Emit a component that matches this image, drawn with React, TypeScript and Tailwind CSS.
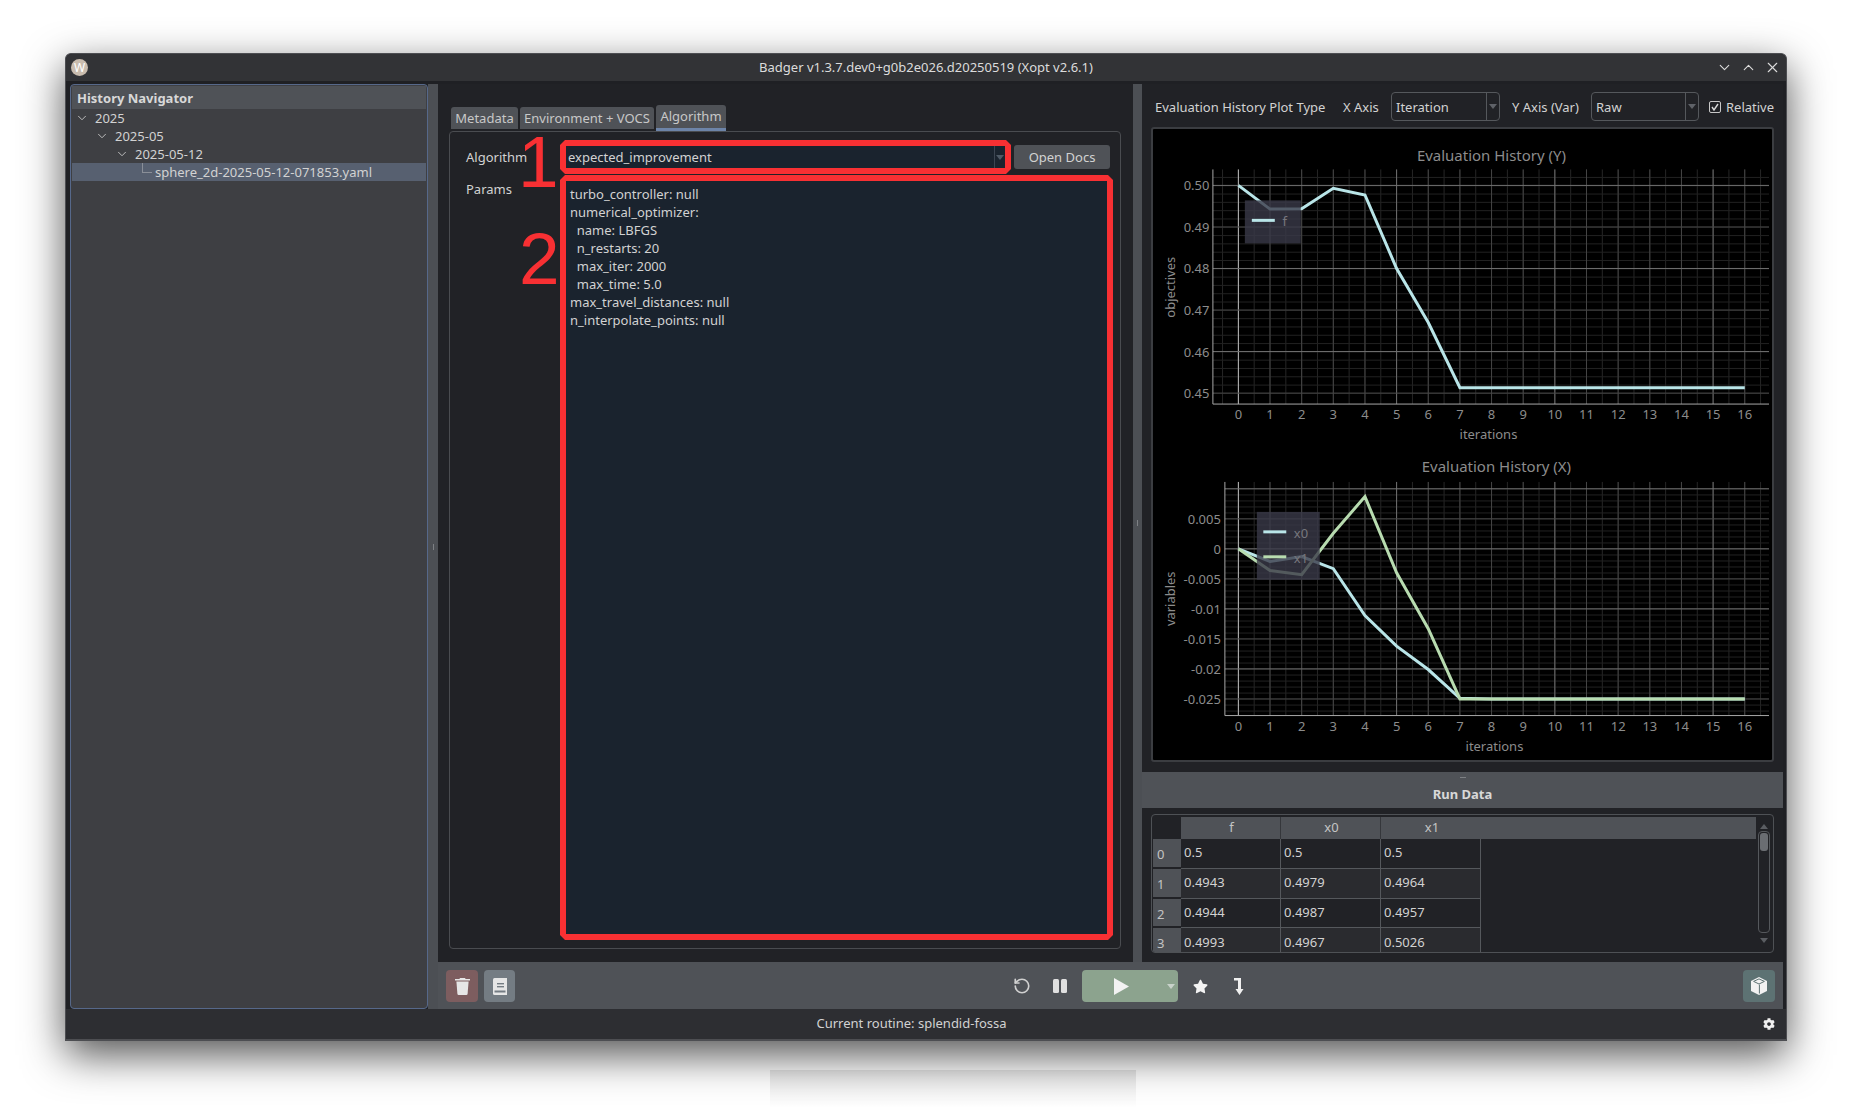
import { ChevronDown, ChevronUp, RotateCcw, X } from "lucide-react";
import { FaCog, FaStar } from "react-icons/fa";

const ITER = Array.from({ length: 17 }, (_, i) => i);
const xPos = (i: number) => 1238.5 + i * 31.7;

const fData = [0.5, 0.4943, 0.4944, 0.4993, 0.4977, 0.48, 0.467, 0.4513, 0.4513, 0.4513, 0.4513, 0.4513, 0.4513, 0.4513, 0.4513, 0.4513, 0.4513];
const x0Data = [0, -0.0021, -0.0013, -0.0033, -0.0111, -0.0162, -0.0201, -0.0249, -0.025, -0.025, -0.025, -0.025, -0.025, -0.025, -0.025, -0.025, -0.025];
const x1Data = [0, -0.0036, -0.0043, 0.0026, 0.0087, -0.004, -0.0133, -0.025, -0.025, -0.025, -0.025, -0.025, -0.025, -0.025, -0.025, -0.025, -0.025];

const y1 = (v: number) => 185 + (0.5 - v) * 4160;
const y2 = (v: number) => 549 - v * 6014;
const pts = (data: number[], fy: (v: number) => number) => data.map((v, i) => `${xPos(i)},${fy(v)}`).join(" ");

const rows = [
  ["0.5", "0.5", "0.5"],
  ["0.4943", "0.4979", "0.4964"],
  ["0.4944", "0.4987", "0.4957"],
  ["0.4993", "0.4967", "0.5026"],
];

const paramLines = [
  "turbo_controller: null",
  "numerical_optimizer:",
  "  name: LBFGS",
  "  n_restarts: 20",
  "  max_iter: 2000",
  "  max_time: 5.0",
  "max_travel_distances: null",
  "n_interpolate_points: null",
];

function Arrow({ color = "#5f6268", up = false }: { color?: string; up?: boolean }) {
  return (
    <svg width="8" height="5" viewBox="0 0 8 5">
      <polygon points={up ? "0,5 8,5 4,0" : "0,0 8,0 4,5"} fill={color} />
    </svg>
  );
}

function Combo({ label, className }: { label: string; className: string }) {
  return (
    <div className={`flex h-[29px] items-center rounded-[4px] border border-[#55585c] ${className}`}>
      <span className="flex-1 pt-[2px] pl-[4px] text-[#d2d2d2]">{label}</span>
      <div className="flex h-full w-[13px] items-center justify-center border-l border-[#55585c]">
        <Arrow />
      </div>
    </div>
  );
}

function TreeRow({ label, pad, selected }: { label: string; pad: string; selected?: boolean }) {
  return (
    <div className={`flex h-[18px] items-center ${pad} ${selected ? "bg-[#576070]" : ""}`}>
      {selected ? (
        <span className="mr-[3px] mb-[9px] h-[10px] w-[10px] border-b border-l border-[#8a8f98]" />
      ) : (
        <ChevronDown size={14} strokeWidth={1.6} className="mr-[6px] text-[#c4c4c4]" />
      )}
      <span className="pt-[2px]">{label}</span>
    </div>
  );
}

function Grid({ top, bottom, left, hFaint, hMid, hBright }: { top: number; bottom: number; left: number; hFaint: number[]; hMid: number[]; hBright: number[] }) {
  const halves = Array.from({ length: 35 }, (_, i) => 1222.65 + i * 15.85).filter((x) => x > left);
  return (
    <g>
      {halves.map((x) => (
        <line key={x} x1={x} x2={x} y1={top} y2={bottom} stroke="#262626" />
      ))}
      {hFaint.map((y) => (
        <line key={y} x1={left} x2={1770} y1={y} y2={y} stroke="#222222" />
      ))}
      {ITER.map((i) => (
        <line key={i} x1={xPos(i)} x2={xPos(i)} y1={top} y2={bottom} stroke={i === 0 ? "#c0c0c0" : i % 5 === 0 ? "#707070" : "#454545"} />
      ))}
      {hMid.map((y) => (
        <line key={y} x1={left} x2={1770} y1={y} y2={y} stroke="#474747" />
      ))}
      {hBright.map((y) => (
        <line key={y} x1={left} x2={1770} y1={y} y2={y} stroke="#707070" />
      ))}
      <line x1={left} x2={left} y1={top} y2={bottom} stroke="#a8a8a8" />
      <line x1={left} x2={1770} y1={bottom} y2={bottom} stroke="#a8a8a8" />
    </g>
  );
}

function XTicks({ y }: { y: number }) {
  return (
    <g>
      {ITER.map((i) => (
        <text key={i} x={xPos(i)} y={y} textAnchor="middle" fontSize="13" fill="#8c8c8c">
          {i}
        </text>
      ))}
    </g>
  );
}

function Plots() {
  const faint1 = Array.from({ length: 27 }, (_, i) => 177 + i * 8.32);
  const faint2 = Array.from({ length: 38 }, (_, i) => 489 + i * 6.014);
  const yLabels2: [string, number][] = [["0.005", 0.005], ["0", 0], ["-0.005", -0.005], ["-0.01", -0.01], ["-0.015", -0.015], ["-0.02", -0.02], ["-0.025", -0.025]];
  return (
    <svg viewBox="1153 129 620 631" className="h-full w-full" fontFamily="'Noto Sans', sans-serif">
      <text x="1492" y="160.5" textAnchor="middle" fontSize="15" fill="#8c8c8c">Evaluation History (Y)</text>
      <Grid top={169} bottom={404} left={1213} hFaint={faint1} hMid={[0.49, 0.47, 0.45].map(y1)} hBright={[0.5, 0.48, 0.46].map(y1)} />
      {[0.5, 0.49, 0.48, 0.47, 0.46, 0.45].map((v) => (
        <text key={v} x="1209.5" y={y1(v) + 5} textAnchor="end" fontSize="13" fill="#8c8c8c">{v.toFixed(2)}</text>
      ))}
      <XTicks y={419} />
      <text x="1489" y="439" textAnchor="middle" fontSize="13" fill="#8c8c8c">iterations</text>
      <text x="1175" y="287" textAnchor="middle" fontSize="13" fill="#8c8c8c" transform="rotate(-90 1175 287)">objectives</text>
      <polyline points={pts(fData, y1)} fill="none" stroke="#b9e5e8" strokeWidth="3" />
      <rect x="1245" y="200" width="56" height="43" fill="rgba(58,57,72,0.8)" />
      <line x1="1252" x2="1275" y1="220" y2="220" stroke="#b9e5e8" strokeWidth="3" />
      <text x="1285" y="226" textAnchor="middle" fontSize="13" fill="#77777d">f</text>

      <text x="1497" y="472" textAnchor="middle" fontSize="15" fill="#8c8c8c">Evaluation History (X)</text>
      <Grid top={482} bottom={716} left={1225} hFaint={faint2} hMid={[0.005, -0.005, -0.015, -0.025].map(y2)} hBright={[0.01, 0, -0.01, -0.02].map(y2)} />
      {yLabels2.map(([t, v]) => (
        <text key={t} x="1221" y={y2(v) + 5} textAnchor="end" fontSize="13" fill="#8c8c8c">{t}</text>
      ))}
      <XTicks y={731} />
      <text x="1495" y="752" textAnchor="middle" fontSize="13" fill="#8c8c8c">iterations</text>
      <text x="1175" y="599" textAnchor="middle" fontSize="13" fill="#8c8c8c" transform="rotate(-90 1175 599)">variables</text>
      <polyline points={pts(x0Data, y2)} fill="none" stroke="#b9e5e8" strokeWidth="3" />
      <polyline points={pts(x1Data, y2)} fill="none" stroke="#b8dcb0" strokeWidth="3" />
      <rect x="1257" y="512" width="63" height="68" fill="rgba(58,57,72,0.8)" />
      <line x1="1263.5" x2="1286.5" y1="532" y2="532" stroke="#b9e5e8" strokeWidth="3" />
      <line x1="1263.5" x2="1286.5" y1="557" y2="557" stroke="#b8dcb0" strokeWidth="3" />
      <text x="1294" y="538" fontSize="13" fill="#77777d">x0</text>
      <text x="1294" y="563" fontSize="13" fill="#77777d">x1</text>
    </svg>
  );
}

function RunTable() {
  return (
    <div className="mx-[9px] mt-[6px] flex h-[139px] overflow-hidden rounded-[4px] border border-[#4e5155] px-[1px] pt-[2px]">
      <div className="w-[603px]">
        <div className="flex h-[22px] pl-[28px]">
          {["f", "x0"].map((h) => (
            <div key={h} className="flex w-[100px] items-center justify-center border-r border-[#35373b] bg-[#4f5257] pl-[2px] text-[#c4c4c4]">
              {h}
            </div>
          ))}
          <div className="flex w-[100px] items-center justify-center bg-[#4f5257] pl-[2px] text-[#c4c4c4]">x1</div>
          <div className="flex-1 bg-[#4f5257]" />
        </div>
        {rows.map((row, i) => (
          <div key={i} className="flex h-[29.8px]">
            <div className="w-[28px] border-b-2 border-[#212226] bg-[#4f5257] pt-[6px] pl-[4px] text-[#c4c4c4]">{i}</div>
            {row.map((c, j) => (
              <div key={j} className={`flex w-[100px] items-center border-r border-b border-[#55585c] pb-px pl-[3px] ${i % 2 ? "bg-[#2a2b2f]" : "bg-[#212226]"}`}>
                {c}
              </div>
            ))}
          </div>
        ))}
      </div>
      <div className="flex flex-1 flex-col items-center pt-[7px]">
        <Arrow up color="#5a5d62" />
        <div className="mt-[2px] h-[102px] w-[12px] rounded-[4px] border border-[#55585c] p-[1px]">
          <div className="h-[18px] rounded-[3px] bg-[#6a6d72]" />
        </div>
        <div className="mt-[5px]">
          <Arrow color="#5a5d62" />
        </div>
      </div>
    </div>
  );
}

function Toolbar() {
  return (
    <div className="flex h-[47px] items-center bg-[#4f5257] pt-px pl-[8px]">
      <button className="flex h-[32px] w-[32px] items-center justify-center rounded-[4px] bg-[#7d5d5f]">
        <svg width="15" height="17" viewBox="0 0 15 17">
          <path d="M5 0h5l.6 1H15v1.6H0V1h4.4z" fill="#e6e6e6" />
          <path d="M1.4 3.6h12.2l-1 12.2q-.1 1.2-1.2 1.2H3.6q-1.1 0-1.2-1.2z" fill="#e6e6e6" />
        </svg>
      </button>
      <button className="ml-[6px] flex h-[32px] w-[31px] items-center justify-center rounded-[4px] bg-[#747c83]">
        <svg width="14" height="17" viewBox="0 0 14 17">
          <path d="M1.5 0H14v17H1.5Q0 17 0 15.5v-14Q0 0 1.5 0z" fill="#e6e6e6" />
          <rect x="4" y="5" width="7" height="1.4" fill="#747c83" />
          <rect x="4" y="8" width="7" height="1.4" fill="#747c83" />
          <rect x="1.5" y="12.5" width="11" height="2" fill="#747c83" />
        </svg>
      </button>
      <RotateCcw size={18} strokeWidth={2.2} className="ml-[498px] text-[#d0d0d0]" />
      <div className="ml-[22px] flex gap-[2px]">
        <span className="h-[14px] w-[6px] rounded-[1.5px] bg-[#e0e0e0]" />
        <span className="h-[14px] w-[6px] rounded-[1.5px] bg-[#e0e0e0]" />
      </div>
      <button className="relative ml-[15px] flex h-[32px] w-[96px] items-center rounded-[4px] bg-[#8ca38e] pl-[32px]">
        <svg width="15" height="17" viewBox="0 0 15 17">
          <polygon points="0,0 15,8.5 0,17" fill="#f2f2f2" />
        </svg>
        <span className="ml-[38px]">
          <Arrow color="#c8d2ca" />
        </span>
      </button>
      <FaStar size={15} className="ml-[15px] text-[#f4f4f4]" />
      <svg width="11" height="17" viewBox="0 0 11 17" className="ml-[25px]">
        <path d="M1 0h7v11h2.5L6.5 17 2.5 11H5V2.4H1z" fill="#f0f0f0" />
      </svg>
      <button className="mr-[8px] ml-auto flex h-[32px] w-[32px] items-center justify-center rounded-[4px] bg-[#5d7273]">
        <svg width="16" height="18" viewBox="0 0 16 18">
          <polygon points="8,0 16,4 16,14 8,18 0,14 0,4" fill="#f2f2f2" />
          <path d="M2.6 4.4 8 1.9l5.4 2.5L8 7z" fill="#f2f2f2" stroke="#5d7273" strokeWidth="1" />
          <line x1="8.4" y1="7.6" x2="8.4" y2="16.5" stroke="#5d7273" strokeWidth="1" />
        </svg>
      </button>
    </div>
  );
}

export default function App() {
  return (
    <div className="relative h-[1119px] w-[1852px] overflow-hidden bg-white pt-[53px] pl-[65px] font-['Noto_Sans',sans-serif] text-[13px] text-[#d2d2d2]">
      {/* stray shadow of the window behind */}
      <div className="absolute top-[1070px] left-[770px] h-[38px] w-[366px] bg-gradient-to-b from-black/10 to-transparent" />

      <div className="relative flex h-[988px] w-[1722px] flex-col rounded-t-[6px] border border-b-2 border-[#4d4e52] bg-[#2d2e32] shadow-[0_14px_42px_rgba(0,0,0,0.68)]">
        <div className="relative flex h-[27px] items-center justify-center rounded-t-[6px] bg-[#323336] text-[#dcdcdc]">
          <div className="absolute top-[5px] left-[5px] flex h-[17px] w-[17px] items-center justify-center rounded-full bg-[#c9bcae] text-[12px] leading-none text-white">
            W
          </div>
          <span>Badger v1.3.7.dev0+g0b2e026.d20250519 (Xopt v2.6.1)</span>
          <div className="absolute top-[5px] right-[5px] flex gap-[7px] text-[#dcdcdc]">
            <ChevronDown size={17} strokeWidth={1.6} />
            <ChevronUp size={17} strokeWidth={1.6} />
            <X size={17} strokeWidth={1.6} />
          </div>
        </div>

        <div className="flex h-[928px] bg-[#1f2024] pt-[3px] pr-[3px] pl-[4px]">
          {/* history navigator */}
          <div className="h-[925px] w-[358px] rounded-[4px] border border-[#56688a] bg-[#3e3f43] p-[1px]">
            <div className="flex h-[23px] items-center bg-[#4f5257] pt-[2px] pl-[5px] font-bold text-[#d8d8d8]">History Navigator</div>
            <TreeRow label="2025" pad="pl-[3px]" />
            <TreeRow label="2025-05" pad="pl-[23px]" />
            <TreeRow label="2025-05-12" pad="pl-[43px]" />
            <TreeRow label="sphere_2d-2025-05-12-071853.yaml" pad="pl-[70px]" selected />
          </div>

          <div className="flex h-[925px] w-[10px] items-center justify-center bg-[#4c4f54]">
            <span className="h-[6px] w-px bg-[#7d8084]" />
          </div>

          <div className="flex w-[1345px] flex-col">
            <div className="flex h-[878px]">
              {/* routine editor */}
              <div className="w-[695px] bg-[#212226] px-[11px] pt-[21px]">
                <div className="flex h-[26px] items-start gap-[2px] pl-[2px]">
                  <div className="mt-[2px] flex h-[22px] w-[67px] items-center justify-center rounded-t-[3px] bg-[#4f5257] pt-[2px] text-[#c8c8c8]">Metadata</div>
                  <div className="mt-[2px] flex h-[22px] w-[134px] items-center justify-center rounded-t-[3px] bg-[#4f5257] pt-[2px] text-[#c8c8c8]">Environment + VOCS</div>
                  <div className="flex h-[26px] w-[70px] items-center justify-center rounded-t-[3px] border-b-[3px] border-[#6d84a8] bg-[#4f5257] pt-px text-[#c8c8c8]">Algorithm</div>
                </div>
                <div className="relative h-[818px] w-[672px] rounded-[4px] border border-[#4a4c50] pt-[8px]">
                  <div className="flex h-[34px] items-center pl-[16px]">
                    <span className="w-[94px] pt-[2px]">Algorithm</span>
                    <div className="flex h-full w-[451px] bg-[#f83033] p-[6px] [clip-path:polygon(5px_0,calc(100%-5px)_0,100%_5px,100%_calc(100%-5px),calc(100%-5px)_100%,5px_100%,0_calc(100%-5px),0_5px)]">
                      <div className="flex h-full flex-1 items-center bg-[#1a232e] pl-[2px]">
                        <span className="flex-1 pt-[2px]">expected_improvement</span>
                        <div className="flex h-full w-[11px] items-center justify-center border-l border-[#3c4552]">
                          <Arrow color="#4e5965" />
                        </div>
                      </div>
                    </div>
                    <button className="ml-[3px] h-[24px] w-[96px] rounded-[3px] bg-[#4f5257] pt-px text-[#d2d2d2]">Open Docs</button>
                  </div>
                  <div className="mt-px flex h-[765px] pl-[16px]">
                    <span className="mt-[5px] w-[94px] leading-[18px]">Params</span>
                    <div className="h-full w-[553px] bg-[#f83033] p-[6px] [clip-path:polygon(5px_0,calc(100%-5px)_0,100%_5px,100%_calc(100%-5px),calc(100%-5px)_100%,5px_100%,0_calc(100%-5px),0_5px)]">
                      <div className="h-full bg-[#1a232e] pt-[4px] pl-[4px] leading-[18px] whitespace-pre">
                        {paramLines.map((l) => (
                          <div key={l}>{l}</div>
                        ))}
                      </div>
                    </div>
                  </div>
                  {/* annotation numbers */}
                  <span className="absolute top-[-7px] left-[68px] text-[73px] leading-none font-['Liberation_Sans',sans-serif] text-[#f83033]">1</span>
                  <span className="absolute top-[90px] left-[69px] text-[73px] leading-none font-['Liberation_Sans',sans-serif] text-[#f83033]">2</span>
                </div>
              </div>

              <div className="flex w-[9px] items-center justify-center bg-[#4c4f54]">
                <span className="h-[6px] w-px bg-[#7d8084]" />
              </div>

              {/* plots and run data */}
              <div className="flex flex-1 flex-col bg-[#212226]">
                <div className="mt-[8px] flex h-[29px] items-center pl-[13px]">
                  <span className="w-[188px] pt-[2px]">Evaluation History Plot Type</span>
                  <span className="w-[48px] pt-[2px]">X Axis</span>
                  <Combo label="Iteration" className="w-[109px]" />
                  <span className="ml-[12px] w-[79px] pt-[2px]">Y Axis (Var)</span>
                  <Combo label="Raw" className="w-[108px]" />
                  <span className="ml-[10px] flex h-[12px] w-[12px] items-center justify-center rounded-[2px] border border-[#c8c8c8] text-[#d8d8d8]">
                    <svg width="8" height="8" viewBox="0 0 8 8">
                      <path d="M1 4l2 3 4-6" fill="none" stroke="currentColor" strokeWidth="1.4" />
                    </svg>
                  </span>
                  <span className="ml-[5px] pt-[2px]">Relative</span>
                </div>
                <div className="mx-[9px] mt-[6px] h-[635px] rounded-[3px] border-2 border-[#3b3d41] bg-black">
                  <Plots />
                </div>
                <div className="mt-[10px] flex h-[36px] flex-col items-center bg-[#4f5257]">
                  <span className="mt-[5px] h-px w-[6px] bg-[#7d8084]" />
                  <span className="mt-[7px] leading-[18px] font-bold text-[#d8d8d8]">Run Data</span>
                </div>
                <RunTable />
              </div>
            </div>
            <Toolbar />
          </div>
        </div>

        <div className="flex h-[29px] items-center rounded-b-[6px] bg-[#2d2e32]">
          <span className="flex-1 pr-[6px] text-center text-[#d2d2d2]">Current routine: splendid-fossa</span>
          <FaCog size={12} className="mr-[11px] text-[#f0f0f0]" />
        </div>
      </div>
    </div>
  );
}
